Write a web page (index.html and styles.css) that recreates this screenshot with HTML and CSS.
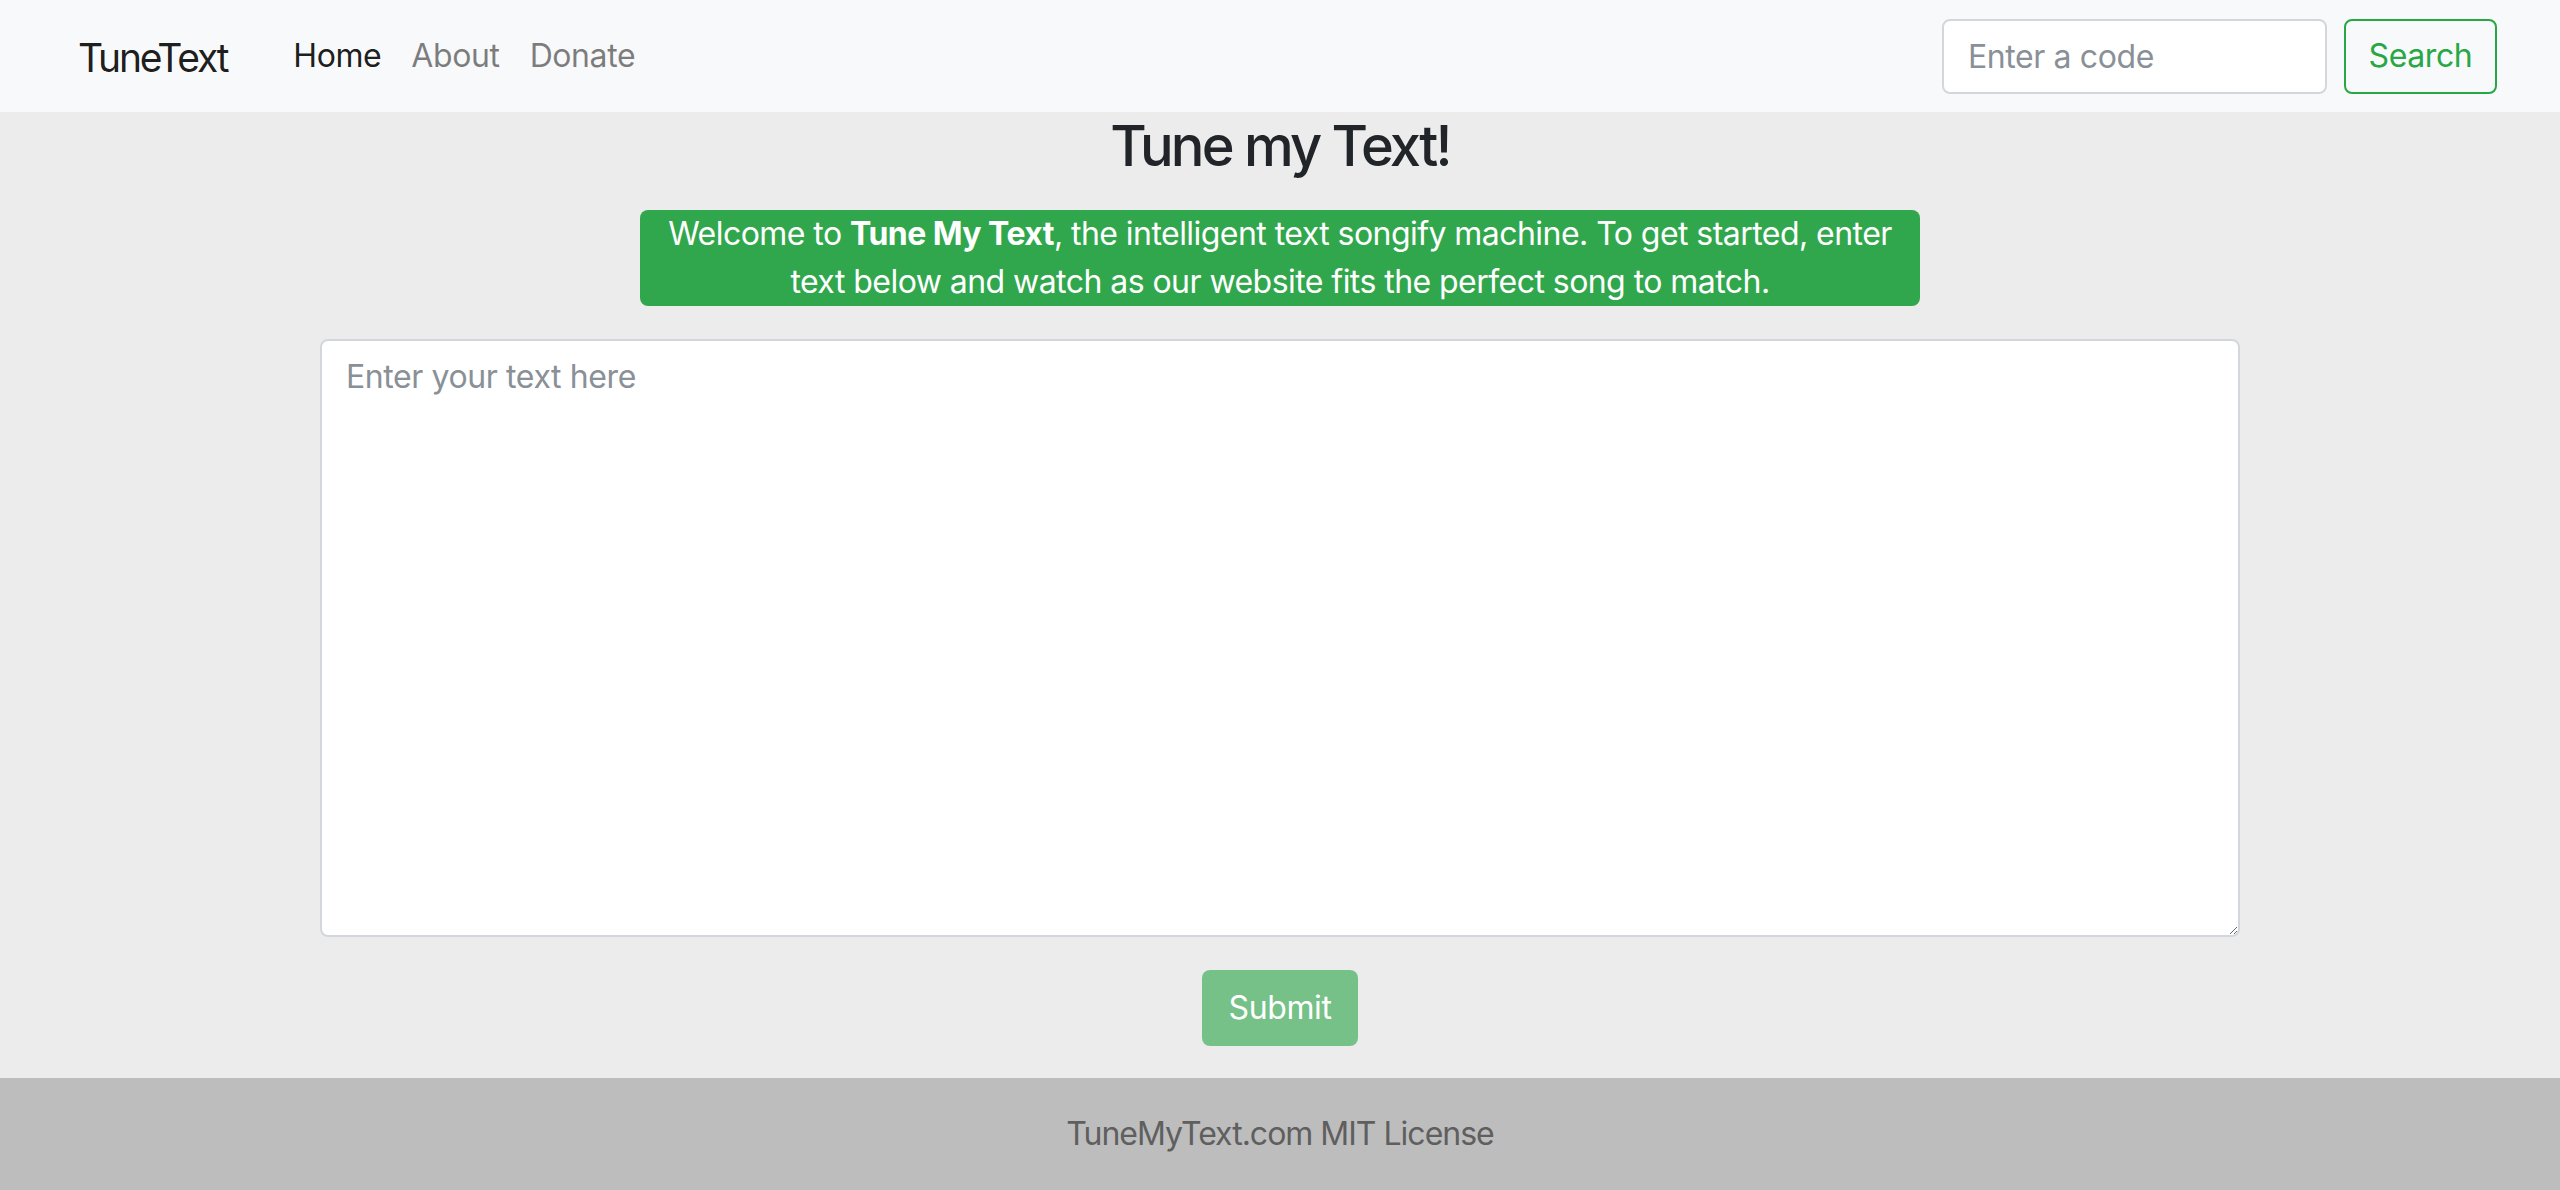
FILE: index.html
```html
<!DOCTYPE html>
<html lang="en">
<head>
<meta charset="utf-8">
<title>TuneText</title>
<link rel="stylesheet" href="styles.css">
</head>
<body>
<nav class="navbar">
  <a class="brand" href="#">TuneText</a>
  <ul class="nav-links">
    <li><a class="nav-link active" href="#">Home</a></li>
    <li><a class="nav-link" href="#">About</a></li>
    <li><a class="nav-link" href="#">Donate</a></li>
  </ul>
  <form class="search-form">
    <input class="code-input" type="text" placeholder="Enter a code">
    <button class="btn-outline" type="button">Search</button>
  </form>
</nav>
<main class="main">
  <h1 class="title">Tune my Text!</h1>
  <p class="welcome">Welcome to <strong>Tune My Text</strong>, the intelligent text songify machine. To get started, enter text below and watch as our website fits the perfect song to match.</p>
  <textarea class="text-area" placeholder="Enter your text here"></textarea>
  <button class="btn-submit" type="button" disabled>Submit</button>
</main>
<footer class="footer">TuneMyText.com MIT License</footer>
</body>
</html>
```

FILE: styles.css
```css
* { box-sizing: border-box; }
html, body { margin: 0; padding: 0; }
body {
  font-family: Inter, "Noto Sans", sans-serif;
  font-size: 32px;
  line-height: 1.5;
  color: #212529;
  background: #ececec;
  min-height: 100vh;
  display: flex;
  flex-direction: column;
}
.navbar {
  height: 112px;
  background: #f8f9fa;
  display: flex;
  align-items: center;
  padding: 0 63px 0 78px;
}
.brand {
  font-size: 39px;
  line-height: 1.5;
  color: rgba(0,0,0,0.9);
  text-decoration: none;
  letter-spacing: -2.2px;
  margin-right: 51px;
  padding-top: 4px;
}
.nav-links {
  list-style: none;
  margin: 0;
  padding: 0;
  display: flex;
  flex: 1;
}
.nav-link {
  display: block;
  padding: 0 15px;
  color: rgba(0,0,0,0.5);
  text-decoration: none;
  letter-spacing: -0.4px;
}
.nav-link.active { color: rgba(0,0,0,0.9); }
.search-form {
  display: flex;
  gap: 17px;
}
.code-input {
  width: 385px;
  height: 75px;
  font: inherit;
  letter-spacing: -0.4px;
  padding: 0 24px;
  border: 2px solid #d3d7dc;
  border-radius: 8px;
  background: #fff;
  color: #495057;
}
.code-input::placeholder { color: #8a9097; }
.btn-outline {
  height: 75px;
  width: 153px;
  font: inherit;
  letter-spacing: -0.4px;
  color: #28a745;
  background: transparent;
  border: 2px solid #28a745;
  border-radius: 8px;
  padding: 0;
}
.main {
  flex: 1;
  display: flex;
  flex-direction: column;
  align-items: center;
}
.title {
  margin: 1px 0 30px;
  font-size: 56px;
  font-weight: 500;
  line-height: 67px;
  letter-spacing: -2.8px;
}
.welcome {
  width: 1280px;
  margin: 0 0 33px;
  background: #31a74d;
  color: #fff;
  border-radius: 8px;
  text-align: center;
  letter-spacing: -0.55px;
  line-height: 48px;
}
.text-area {
  width: 1920px;
  height: 598px;
  font: inherit;
  letter-spacing: -0.4px;
  padding: 12px 24px;
  border: 2px solid #d3d7dc;
  border-radius: 8px;
  background: #fff;
  margin: 0 0 33px;
  color: #495057;
}
.text-area::placeholder { color: #8a9097; }
.btn-submit {
  width: 156px;
  height: 76px;
  font: inherit;
  letter-spacing: -0.4px;
  color: #fff;
  background: #75c187;
  border: none;
  border-radius: 8px;
  padding: 0;
  margin-bottom: 32px;
}
.footer {
  height: 112px;
  background: #bdbdbd;
  color: #5f5f5f;
  display: flex;
  align-items: center;
  justify-content: center;
  letter-spacing: -1px;
}
```
